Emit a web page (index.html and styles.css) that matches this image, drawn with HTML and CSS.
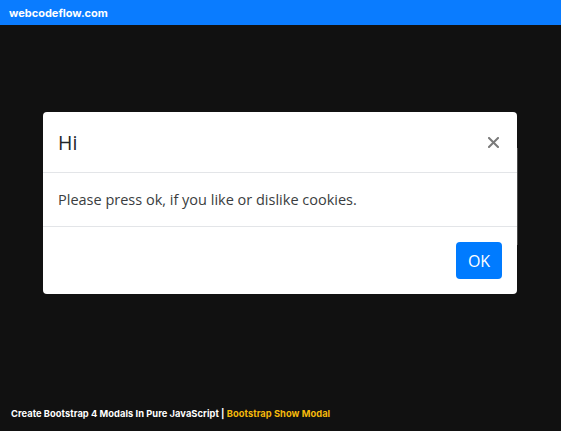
FILE: index.html
```html
<!DOCTYPE html>
<html lang="en">
<head>
<meta charset="utf-8">
<title>Bootstrap Show Modal</title>
<link rel="stylesheet" href="styles.css">
</head>
<body>
<div class="page">
  <header class="topbar">webcodeflow.com</header>
  <main class="stage">
    <div class="ghost"></div>
    <div class="modal">
      <div class="modal-header">
        <h5 class="modal-title">Hi</h5>
        <button class="close" type="button" aria-label="Close">
          <svg width="11" height="11" viewBox="0 0 11 11"><path d="M1 1L10 10M10 1L1 10" stroke="#7a7a7a" stroke-width="2" stroke-linecap="square"/></svg>
        </button>
      </div>
      <div class="modal-body">Please press ok, if you like or dislike cookies.</div>
      <div class="modal-footer">
        <button class="btn" type="button">OK</button>
      </div>
    </div>
  </main>
  <footer class="credit">Create Bootstrap 4 Modals In Pure JavaScript | <span class="hl">Bootstrap Show Modal</span></footer>
</div>
</body>
</html>
```
FILE: styles.css
```css
html, body {
  margin: 0;
  padding: 0;
  background: #111111;
}
.page {
  height: 431px;
  display: flex;
  flex-direction: column;
}
.topbar {
  height: 25px;
  background: #0a7cff;
  color: #ffffff;
  font-family: "Inter", "DejaVu Sans", sans-serif;
  font-weight: 700;
  font-size: 11px;
  line-height: 26px;
  padding-left: 9px;
  box-sizing: border-box;
}
.stage {
  flex: 1;
  position: relative;
  padding: 87px 0 0 43px;
}
.ghost {
  position: absolute;
  left: 517px;
  top: 123px;
  width: 1px;
  height: 97px;
  background: #4a4a4a;
}
.modal {
  position: relative;
  width: 474px;
  background: #ffffff;
  border-radius: 4px;
  font-family: "Open Sans", "Noto Sans", sans-serif;
  color: #212529;
}
.modal-header {
  height: 61px;
  display: flex;
  align-items: center;
  justify-content: space-between;
  padding: 0 18px 0 15px;
  border-bottom: 1px solid #e3e5e8;
  box-sizing: border-box;
}
.modal-title {
  margin: 0;
  font-size: 19.5px;
  font-weight: 400;
  color: #212529;
  line-height: 1;
  padding-top: 1px;
}
.close {
  border: 0;
  background: transparent;
  padding: 0;
  width: 11px;
  height: 11px;
  display: flex;
  margin-top: 1px;
}
.modal-body {
  height: 54px;
  line-height: 54px;
  padding: 0 15px;
  font-size: 14.5px;
  color: #3a3d40;
  border-bottom: 1px solid #e3e5e8;
  box-sizing: border-box;
}
.modal-footer {
  height: 67px;
  display: flex;
  justify-content: flex-end;
  padding: 15px 15px 0 0;
  box-sizing: border-box;
}
.btn {
  width: 46px;
  height: 37px;
  border: 0;
  border-radius: 4px;
  background: #007bff;
  color: #ffffff;
  font-family: "Open Sans", "Noto Sans", sans-serif;
  font-size: 16px;
  padding: 0;
}
.credit {
  height: 36px;
  padding: 13px 0 0 11px;
  box-sizing: border-box;
  line-height: 12px;
  font-family: "Inter", "DejaVu Sans", sans-serif;
  font-weight: 700;
  font-size: 9.3px;
  color: #ffffff;
  letter-spacing: 0.05px;
  white-space: nowrap;
}
.hl {
  color: #f6b90b;
}
```
